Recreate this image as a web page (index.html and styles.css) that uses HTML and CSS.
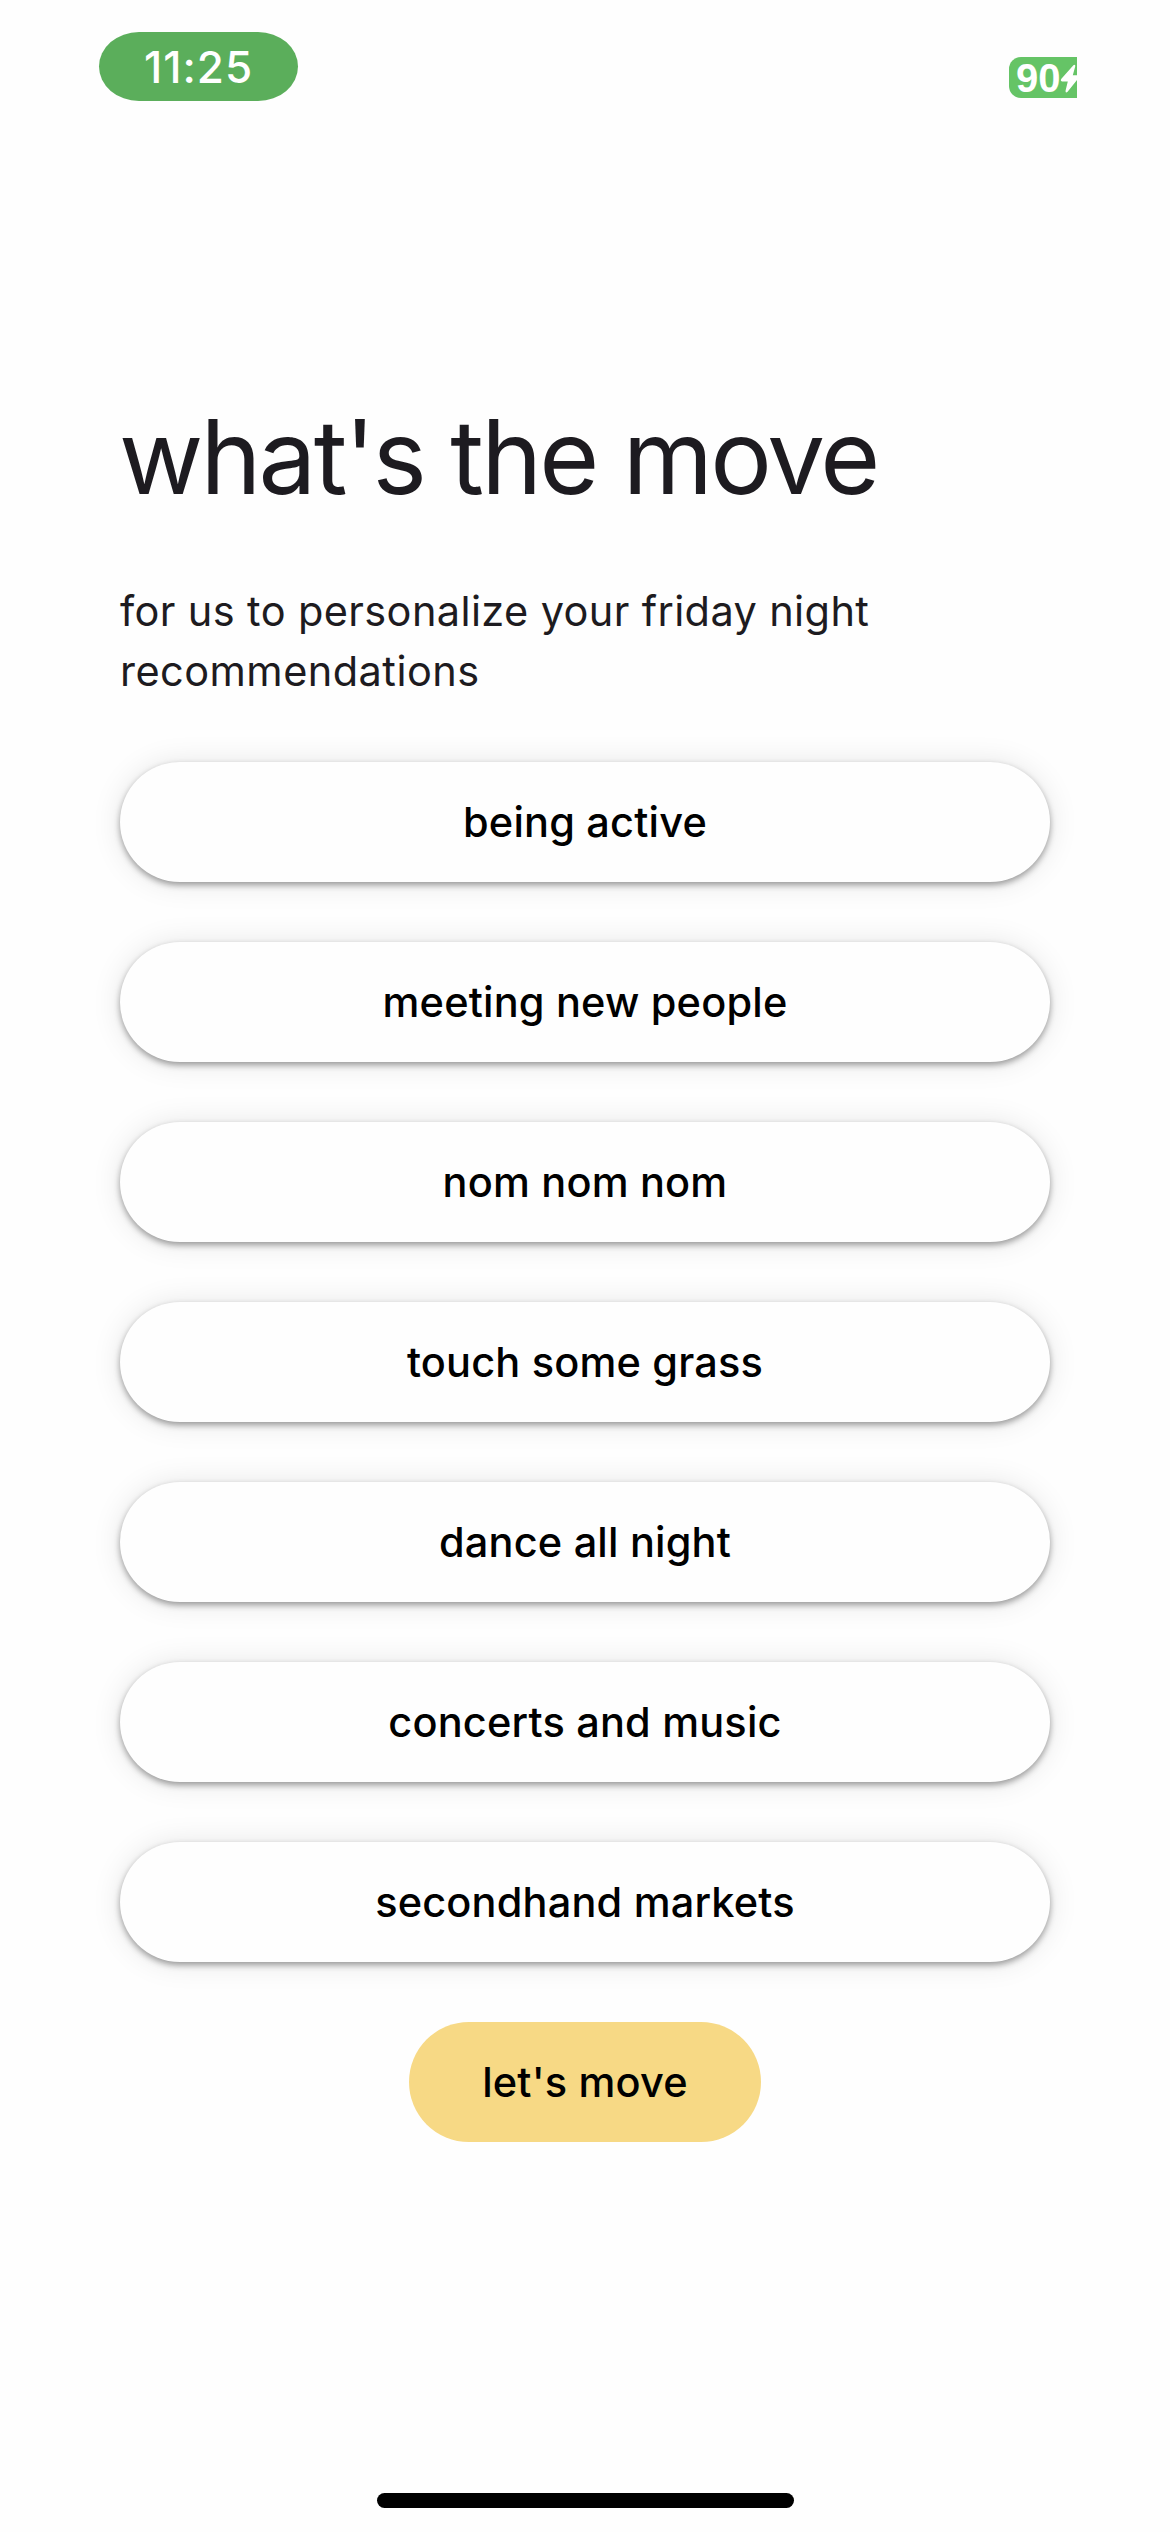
FILE: index.html
```html
<!DOCTYPE html>
<html lang="en">
<head>
<meta charset="utf-8">
<title>what's the move</title>
<link rel="stylesheet" href="styles.css">
</head>
<body>
<div class="screen">
  <header class="status-bar">
    <div class="clock">11:25</div>
    <div class="battery">
      <span class="battery-level">90</span>
      <svg class="battery-bolt" width="17" height="41" viewBox="51 0 17 41" aria-hidden="true">
        <path d="M64.4 8.2Q66.6 6.8 66.2 9.6L63.8 18.2H68V23L58.6 34.8Q56.2 36.6 56.6 33.6L58.8 24.4H53Q51 23.8 52.4 21.8Z" fill="#fff"/>
      </svg>
    </div>
  </header>
  <main class="content">
    <h1 class="title">what's the move</h1>
    <p class="subtitle">
      <span class="line">for us to personalize your friday night</span>
      <span class="line line-last">recommendations</span>
    </p>
    <div class="options">
      <button class="option">being active</button>
      <button class="option">meeting new people</button>
      <button class="option">nom nom nom</button>
      <button class="option">touch some grass</button>
      <button class="option">dance all night</button>
      <button class="option">concerts and music</button>
      <button class="option">secondhand markets</button>
    </div>
    <button class="submit">let's move</button>
  </main>
  <div class="home-indicator"></div>
</div>
</body>
</html>
```
FILE: styles.css
```css
* {
  box-sizing: border-box;
}

body {
  margin: 0;
  background: #fefefe;
  font-family: Inter, "Liberation Sans", sans-serif;
}

.screen {
  display: flex;
  flex-direction: column;
  width: 1170px;
  height: 2532px;
  overflow: hidden;
}

.status-bar {
  display: flex;
  justify-content: space-between;
  align-items: flex-start;
  height: 391px;
  padding: 32px 93px 0 99px;
}

.clock {
  width: 199px;
  height: 69px;
  padding-left: 45px;
  border-radius: 40px / 34.5px;
  background: #5bae5b;
  color: #fff;
  font-size: 44px;
  font-weight: 500;
  letter-spacing: 1px;
  line-height: 70px;
}

.battery {
  display: flex;
  justify-content: space-between;
  width: 68px;
  height: 41px;
  margin-top: 25px;
  padding-left: 7px;
  border-radius: 12px 0 0 12px;
  background: #65c466;
}

.battery-level {
  width: 44px;
  color: #fff;
  font-family: "Liberation Sans", sans-serif;
  font-size: 40px;
  font-weight: 700;
  line-height: 42px;
}

.battery-bolt {
  flex: none;
}

.content {
  display: flex;
  flex-direction: column;
  padding: 0 120px;
}

.title {
  margin: 0 0 58px -1px;
  color: #1d1b20;
  font-size: 103px;
  font-weight: 400;
  letter-spacing: -2.8px;
  line-height: 132px;
}

.subtitle {
  margin: 0 0 61px;
  color: #1d1b20;
  font-size: 41.5px;
  letter-spacing: 0.38px;
  line-height: 60px;
}

.line {
  display: block;
  white-space: nowrap;
}

.line-last {
  letter-spacing: 0.45px;
}

.options {
  display: flex;
  flex-direction: column;
  gap: 60px;
}

.option,
.submit {
  height: 120px;
  padding: 0;
  border: 0;
  border-radius: 60px;
  color: #000;
  font-family: inherit;
  font-size: 41.5px;
  font-weight: 500;
  letter-spacing: 0.18px;
  line-height: 120px;
}

.option {
  background: #fefefe;
  box-shadow: 0 3px 6px rgba(0, 0, 0, 0.37), 0 1px 30px rgba(0, 0, 0, 0.1);
}

.submit {
  align-self: center;
  width: 352px;
  margin-top: 60px;
  background: #f7d985;
}

.home-indicator {
  width: 417px;
  height: 15px;
  margin: auto auto 24px 377px;
  border-radius: 8px;
  background: #000;
}
```
